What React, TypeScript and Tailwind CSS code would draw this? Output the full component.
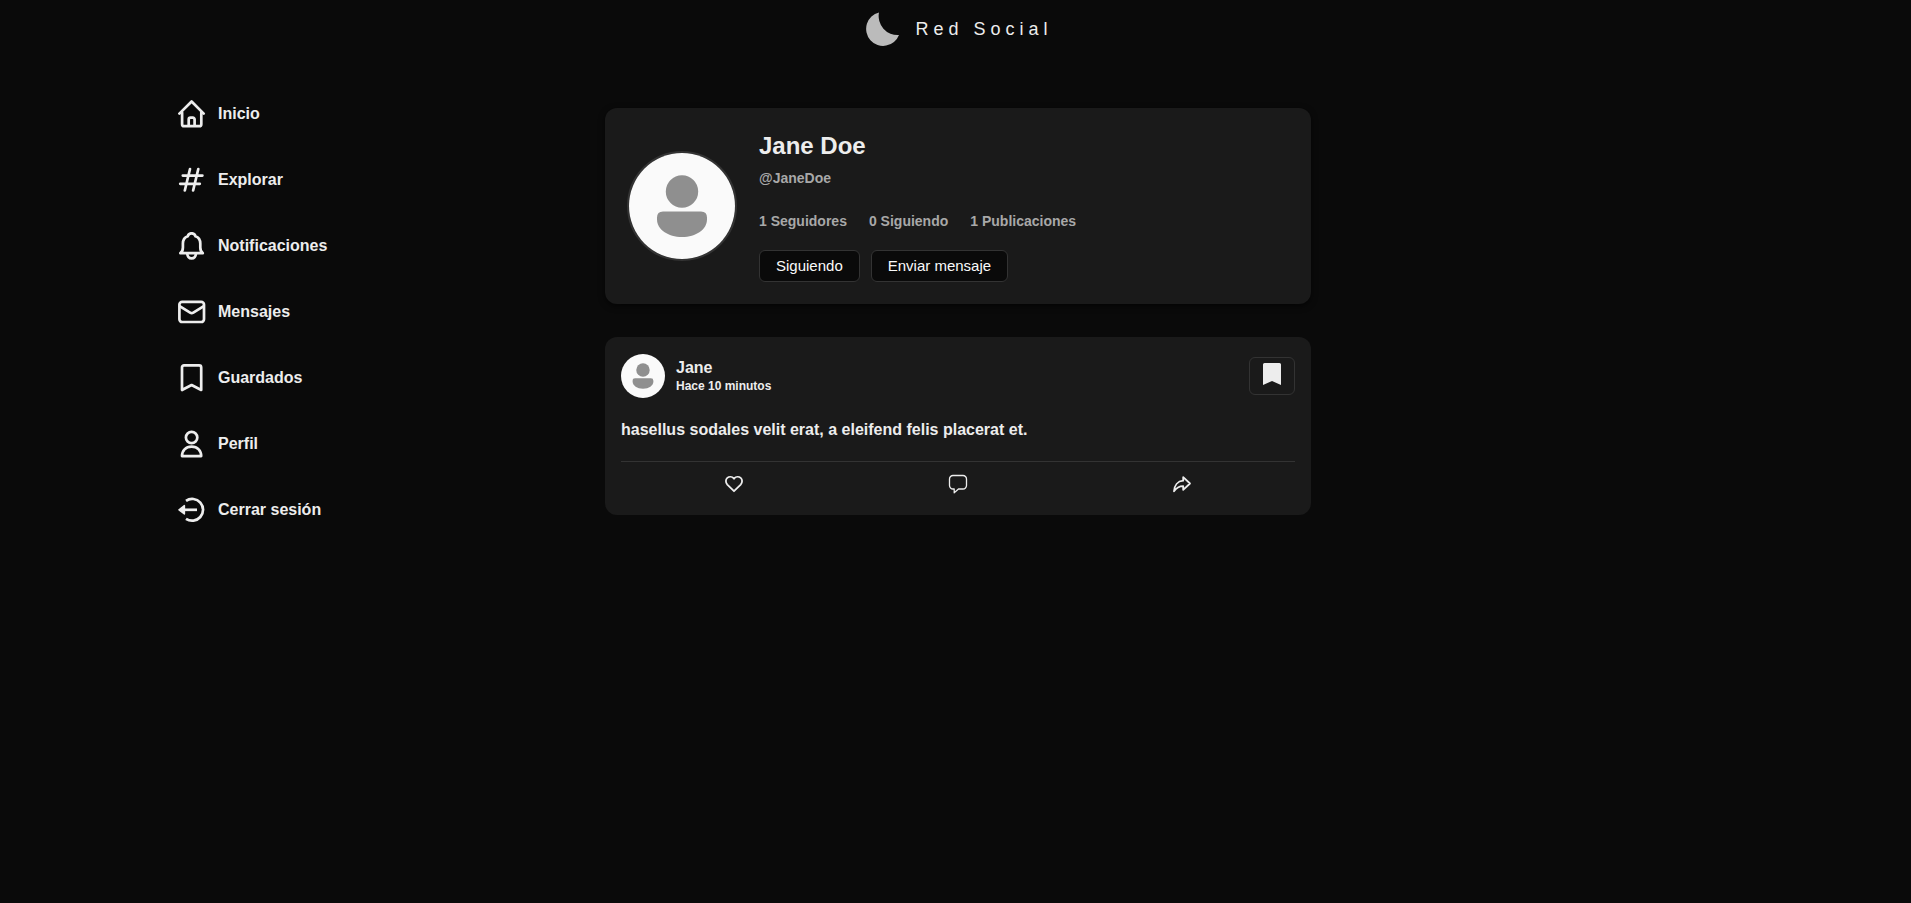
import type { ReactNode } from "react";

const stroke = {
  fill: "none",
  stroke: "currentColor",
  strokeWidth: 2.7,
  strokeLinecap: "round",
  strokeLinejoin: "round",
} as const;

function NavIcon({ children }: { children: ReactNode }) {
  return (
    <svg viewBox="0 0 28 28" className="size-7 shrink-0" aria-hidden="true" {...stroke}>
      {children}
    </svg>
  );
}

const navItems: { label: string; icon: ReactNode }[] = [
  {
    label: "Inicio",
    icon: (
      <>
        <path d="M1.4 13.600 13.600 1.500l12.100 12.100" />
        <path d="M4.100 12.500v11.700a2 2 0 0 0 2 2h15.200a2 2 0 0 0 2-2V12.500" />
        <path d="M10.700 25.500v-6a1.800 1.800 0 0 1 1.800-1.800h2.300a1.800 1.800 0 0 1 1.800 1.800v6" />
      </>
    ),
  },
  {
    label: "Explorar",
    icon: <path d="M12 3 6.800 24.500M20.300 3l-5.200 21.500M4.800 9.600h19.600M2.200 17.800h19.600" />,
  },
  {
    label: "Notificaciones",
    icon: (
      <>
        <path d="M2.400 21.200h22.400c-1.700-1.200-2.500-3.400-2.500-5.600v-4c0-3.400-1.800-6.400-4.900-7.400-.4-1.800-1.800-2.900-3.800-2.900s-3.400 1.100-3.800 2.900c-3.100 1-4.900 4-4.900 7.400v4c0 2.200-.8 4.400-2.500 5.600z" />
        <path d="M9.300 21.500c0 2.800 1.700 4.900 4.300 4.900s4.300-2.100 4.300-4.900" />
      </>
    ),
  },
  {
    label: "Mensajes",
    icon: (
      <>
        <rect x="1.400" y="3.800" width="24.600" height="20.200" rx="2.800" />
        <path d="M2 8.400l10.100 6.300a3 3 0 0 0 3.200 0L25.400 8.400" />
      </>
    ),
  },
  {
    label: "Guardados",
    icon: <path d="M4 26V3.400a2 2 0 0 1 2-2h15.200a2 2 0 0 1 2 2V26l-9.600-5z" />,
  },
  {
    label: "Perfil",
    icon: (
      <>
        <circle cx="13.600" cy="7.500" r="5.700" />
        <path d="M4 26.100c0-5.400 3.600-9.400 9.600-9.400s9.600 4 9.600 9.400z" />
      </>
    ),
  },
  {
    label: "Cerrar sesión",
    icon: (
      <>
        <path d="M8 4.800a10.900 10.900 0 1 1 0 18" strokeLinecap="butt" />
        <path d="M6 13.800h13" strokeLinecap="butt" />
        <path d="M1 13.800 6.400 9.600v8.400z" fill="currentColor" strokeWidth="1.500" />
      </>
    ),
  },
];

function Avatar({ className }: { className: string }) {
  return (
    <svg viewBox="0 0 106 106" className={className} role="img" aria-label="Jane Doe">
      <rect width="106" height="106" fill="#fafafa" />
      <circle cx="53" cy="38.500" r="16.200" fill="#8f8f8f" />
      <path
        d="M34 58.500h38q6 0 6 6v2c0 10-11 17.500-25 17.500s-25-7.500-25-17.500v-2q0-6 6-6z"
        fill="#8f8f8f"
      />
    </svg>
  );
}

function ProfileCard() {
  return (
    <section className="flex items-center gap-[22px] rounded-xl bg-[#1a1a1a] px-[22px] py-5 shadow-[0_2px_6px_rgba(0,0,0,0.6)]">
      <Avatar className="size-[110px] shrink-0 rounded-full border-2 border-[#333333]" />
      <div className="flex flex-col items-start pb-0.5">
        <h1 className="text-2xl leading-9 font-bold">Jane Doe</h1>
        <p className="mt-0.5 text-sm leading-6 font-bold text-[#a8a8a8]">@JaneDoe</p>
        <ul className="mt-[19px] flex gap-[22px] text-sm leading-6 font-bold text-[#a8a8a8]">
          <li>1 Seguidores</li>
          <li>0 Siguiendo</li>
          <li>1 Publicaciones</li>
        </ul>
        <div className="mt-[17px] flex gap-[11px] text-[15px] leading-5 text-[#fafafa]">
          <button className="h-8 rounded-md border border-[#333333] bg-[#0a0a0a] px-4">
            Siguiendo
          </button>
          <button className="h-8 rounded-md border border-[#333333] bg-[#0a0a0a] px-4">
            Enviar mensaje
          </button>
        </div>
      </div>
    </section>
  );
}

function Post() {
  return (
    <article className="rounded-xl bg-[#1a1a1a] px-4 pt-[17px] pb-[21px]">
      <header className="flex items-center gap-[11px]">
        <Avatar className="size-11 shrink-0 rounded-full" />
        <div className="flex flex-1 flex-col">
          <a href="#jane" className="text-base leading-5 font-bold">Jane</a>
          <time className="text-xs leading-4 font-bold">Hace 10 minutos</time>
        </div>
        <button
          aria-label="Quitar de guardados"
          className="flex h-[38px] w-[46px] items-start justify-center rounded-md border border-[#333333] pt-[5px]"
        >
          <svg viewBox="0 0 18 22" className="h-[22px] w-[18px]" fill="currentColor" aria-hidden="true">
            <path d="M0 22V1.500Q0 0 1.500 0h15Q18 0 18 1.500V22l-9-4z" />
          </svg>
        </button>
      </header>
      <p className="mt-5 text-base leading-6 font-bold">
        hasellus sodales velit erat, a eleifend felis placerat et.
      </p>
      <footer className="mt-[19px] grid grid-cols-3 border-t border-[#333333] px-px pt-3">
        <button aria-label="Me gusta" className="flex justify-center">
          <svg viewBox="0 0 20 20" className="size-5" aria-hidden="true" {...stroke} strokeWidth={1.800}>
            <path d="M10 17.200 3.300 10.600C1.400 8.600 1.500 5.500 3.300 3.900c1.900-1.600 4.700-1.400 6.300.3l.4.500.4-.5c1.600-1.700 4.400-1.900 6.300-.3 1.800 1.600 1.900 4.700 0 6.700z" />
          </svg>
        </button>
        <button aria-label="Comentar" className="flex justify-center">
          <svg viewBox="0 0 20 20" className="size-5" aria-hidden="true" {...stroke} strokeWidth={1.300}>
            <path d="M5 1.500h10a3.500 3.500 0 0 1 3.500 3.500v6.500A3.500 3.500 0 0 1 15 15h-4.500L6.200 18.800V15H5a3.500 3.500 0 0 1-3.500-3.500V5A3.500 3.500 0 0 1 5 1.500z" />
          </svg>
        </button>
        <button aria-label="Compartir" className="flex justify-center">
          <svg viewBox="0 0 20 20" className="size-5" aria-hidden="true" {...stroke} strokeWidth={1.800}>
            <path d="M11.200 3.200 18 9.500l-6.800 6.300v-3.700c-4 0-6.800 1.500-9.200 5.200.3-5.800 3.600-10.100 9.200-10.600z" />
          </svg>
        </button>
      </footer>
    </article>
  );
}

export default function App() {
  return (
    <div className="min-h-screen bg-[#0a0a0a] font-['Liberation_Sans',Arial,sans-serif] text-[#ededed]">
      <header className="flex h-[58px] items-center justify-center gap-4 pl-2">
        <svg viewBox="0 0 33 34" className="h-[34px] w-[33px]" aria-hidden="true">
          <path d="M13 .4A17 17 0 1 0 33 23 19 19 0 0 1 13 .4z" fill="#bbbbbb" />
        </svg>
        <span className="text-lg tracking-[5px]">Red Social</span>
      </header>
      <div className="grid grid-cols-[445px_minmax(0,706px)] pl-40">
        <nav className="pt-[42px] pl-[18px]">
          <ul className="flex flex-col gap-[38px]">
            {navItems.map(({ label, icon }) => (
              <li key={label}>
                <a href={`#${label}`} className="flex w-fit items-center gap-3 text-base leading-7 font-bold">
                  <NavIcon>{icon}</NavIcon>
                  {label}
                </a>
              </li>
            ))}
          </ul>
        </nav>
        <main className="flex flex-col gap-[33px] pt-[50px]">
          <ProfileCard />
          <Post />
        </main>
      </div>
    </div>
  );
}
